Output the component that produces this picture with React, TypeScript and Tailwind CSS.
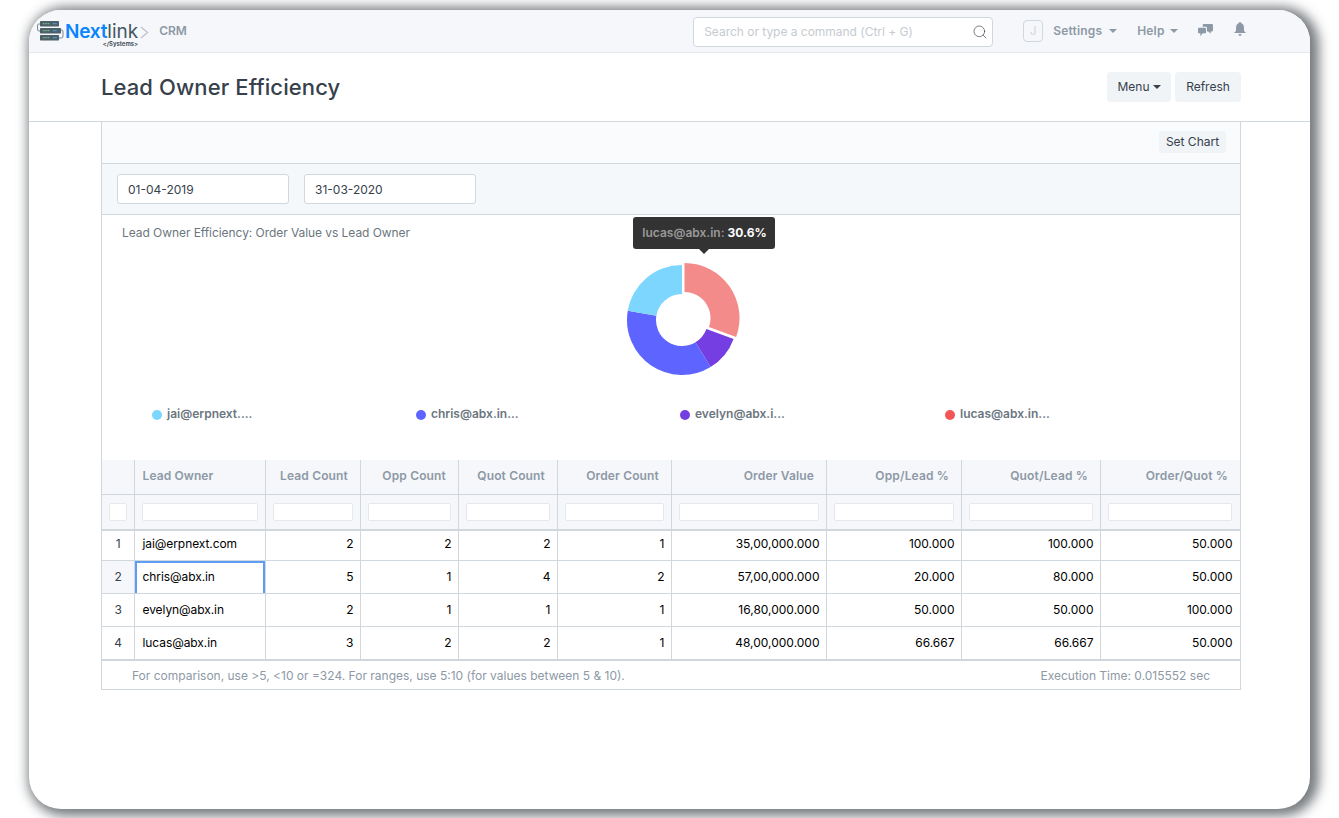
import React from 'react';
import { Search } from 'lucide-react';

interface Row {
  owner: string;
  values: string[];
}

const columns = [
  { label: 'Lead Count', width: 'w-[95px]' },
  { label: 'Opp Count', width: 'w-[98px]' },
  { label: 'Quot Count', width: 'w-[99px]' },
  { label: 'Order Count', width: 'w-[114px]' },
  { label: 'Order Value', width: 'w-[155px]' },
  { label: 'Opp/Lead %', width: 'w-[135px]' },
  { label: 'Quot/Lead %', width: 'w-[139px]' },
  { label: 'Order/Quot %', width: 'w-[140px]' },
];

const rows: Row[] = [
  { owner: 'jai@erpnext.com', values: ['2', '2', '2', '1', '35,00,000.000', '100.000', '100.000', '50.000'] },
  { owner: 'chris@abx.in', values: ['5', '1', '4', '2', '57,00,000.000', '20.000', '80.000', '50.000'] },
  { owner: 'evelyn@abx.in', values: ['2', '1', '1', '1', '16,80,000.000', '50.000', '50.000', '100.000'] },
  { owner: 'lucas@abx.in', values: ['3', '2', '2', '1', '48,00,000.000', '66.667', '66.667', '50.000'] },
];

const rowHeights = ['h-[30px]', 'h-[33px]', 'h-[33px]', 'h-[34px]'];

const legend = [
  { label: 'jai@erpnext....', dot: 'bg-[#7cd6fd]' },
  { label: 'chris@abx.in...', dot: 'bg-[#5e64ff]' },
  { label: 'evelyn@abx.i...', dot: 'bg-[#743ee2]' },
  { label: 'lucas@abx.in...', dot: 'bg-[#f25555]' },
];

// donut slices, clockwise from 12 o'clock
const slices = [
  { from: 0, to: 110.2, fill: '#f48b8b', dx: 2.5, dy: -2 },
  { from: 110.2, to: 148.7, fill: '#743ee2', dx: 0, dy: 0 },
  { from: 148.7, to: 279.6, fill: '#5e64ff', dx: 0, dy: 0 },
  { from: 279.6, to: 360, fill: '#7cd6fd', dx: 0, dy: 0 },
];

const slicePath = (from: number, to: number, cx: number, cy: number) => {
  const pt = (r: number, a: number) => {
    const rad = (a * Math.PI) / 180;
    return `${(cx + r * Math.sin(rad)).toFixed(2)} ${(cy - r * Math.cos(rad)).toFixed(2)}`;
  };
  const big = to - from > 180 ? 1 : 0;
  return `M${pt(55, from)} A55 55 0 ${big} 1 ${pt(55, to)} L${pt(26, to)} A26 26 0 ${big} 0 ${pt(26, from)} Z`;
};

const Logo = () => (
  <div className="flex items-center">
    <svg width="27" height="22" viewBox="0 0 27 22" className="shrink-0">
      <path d="M4 4 H1.5 Q0.5 4 0.5 6 V9 Q0.5 11 2 11 H4" fill="none" stroke="#5b6b75" strokeWidth="0.8" />
      <path d="M22 10 H25 Q26 10 26 12 V16 Q26 18 24.5 18 H22" fill="none" stroke="#5b6b75" strokeWidth="0.8" />
      <rect x="3" y="1" width="19" height="5.4" rx="0.6" fill="#4d5f69" />
      <rect x="3" y="8" width="21" height="5.4" rx="0.6" fill="#4d5f69" />
      <rect x="3" y="15" width="19" height="5.4" rx="0.6" fill="#4d5f69" />
      <path d="M6 3.7 H13 M6 10.7 H13 M6 17.7 H13" stroke="#7ed98a" strokeWidth="0.9" strokeDasharray="1.5 0.8" />
      <path d="M16 3.7 H20 M16 10.7 H20 M16 17.7 H20" stroke="#4aa3df" strokeWidth="1.2" strokeDasharray="1.5 0.6" />
    </svg>
    <div className="relative ml-px flex items-center">
      <span className="text-[19px] leading-none font-semibold tracking-[-0.2px] text-[#0a84ff]">Next</span>
      <span className="text-[19px] leading-none font-normal text-[#44565f]">link</span>
      <span className="absolute top-[19px] right-0 text-[6px] leading-none font-semibold text-[#36414c]">&lt;/Systems&gt;</span>
    </div>
    <svg width="9" height="13" viewBox="0 0 9 13" className="mt-[2px] ml-[2px]">
      <path d="M1 1 L7.5 6.5 L1 12" fill="none" stroke="#c0c6cc" strokeWidth="1.5" />
    </svg>
  </div>
);

const Navbar = () => (
  <header className="flex h-[43px] shrink-0 items-center rounded-t-[32px] border-b border-[#e5e9ed] bg-[#f5f7fa] pl-[8px]">
    <Logo />
    <span className="ml-[10px] w-[29px] text-[12px] font-semibold text-[#8d99a6]">CRM</span>
    <div className="mt-[2px] ml-[505px] flex h-[30px] w-[300px] items-center justify-between rounded-[4px] border border-[#d1d8dd] bg-white pr-[4px] pl-[10px]">
      <span className="text-[12px] tracking-[-0.02px] text-[#c5cbd1]">Search or type a command (Ctrl + G)</span>
      <Search size={16} strokeWidth={1} className="text-[#36414c]" />
    </div>
    <div className="ml-[30px] flex h-[22px] w-[20px] items-center justify-center rounded-[4px] border border-[#d1d8dd] text-[12px] text-[#d1d8dd]">J</div>
    <span className="ml-[10px] w-[51px] text-[12px] font-semibold tracking-[0.2px] text-[#8d99a6]">Settings</span>
    <span className="ml-[5px] h-0 w-0 border-x-[4px] border-t-[4px] border-x-transparent border-t-[#8d99a6]" />
    <span className="ml-[20px] w-[28px] text-[12px] font-semibold tracking-[0.2px] text-[#8d99a6]">Help</span>
    <span className="ml-[5px] h-0 w-0 border-x-[4px] border-t-[4px] border-x-transparent border-t-[#8d99a6]" />
    <svg width="15" height="14" viewBox="0 0 16 15" className="ml-[20px]" fill="#8d99a6">
      <path d="M5 1 Q5 0 6 0 H15 Q16 0 16 1 V7 Q16 8 15 8 H13.5 V10.5 L11 8 H9.5 V4 Q9.5 3 8.5 3 H5 Z" />
      <path d="M1 4 H7.5 Q8.5 4 8.5 5 V9 Q8.5 10 7.5 10 H5 L2.5 13 V10 H1 Q0 10 0 9 V5 Q0 4 1 4 Z" />
    </svg>
    <svg width="12" height="14" viewBox="0 0 12 14" className="mb-[4px] ml-[21px]" fill="#8d99a6">
      <path d="M6 0 Q7 0 7 1 Q10 2 10 6 V9 L12 11 H0 L2 9 V6 Q2 2 5 1 Q5 0 6 0 Z M4.5 12 H7.5 Q7.5 14 6 14 Q4.5 14 4.5 12 Z" />
    </svg>
  </header>
);

const PageHead = () => (
  <div className="flex h-[69px] shrink-0 items-center justify-between border-b border-[#d1d8dd] pr-[69px] pl-[72px]">
    <h1 className="text-[22px] leading-none font-medium tracking-[0.1px] text-[#36414c]">Lead Owner Efficiency</h1>
    <div className="flex gap-[4px]">
      <button className="flex h-[30px] w-[64px] items-center justify-center gap-[3px] rounded-[4px] bg-[#f0f4f7] text-[12px] text-[#36414c]">
        Menu
        <span className="h-0 w-0 border-x-[4px] border-t-[4px] border-x-transparent border-t-[#36414c]" />
      </button>
      <button className="h-[30px] w-[66px] rounded-[4px] bg-[#f0f4f7] text-[12px] text-[#36414c]">Refresh</button>
    </div>
  </div>
);

const Filters = () => (
  <>
    <div className="flex h-[42px] items-center justify-end border-b border-[#d1d8dd] bg-[#fafbfc] pr-[14px] pb-[2px]">
      <button className="h-[22px] w-[67px] rounded-[3px] bg-[#f0f4f7] text-[12px] text-[#36414c]">Set Chart</button>
    </div>
    <div className="flex h-[51px] items-center gap-[15px] border-b border-[#d1d8dd] bg-[#f4f8fb] pl-[15px]">
      <div className="flex h-[30px] w-[172px] items-center rounded-[3px] border border-[#d1d8dd] bg-white pt-[2px] pl-[10px] text-[12px] text-[#36414c]">01-04-2019</div>
      <div className="flex h-[30px] w-[172px] items-center rounded-[3px] border border-[#d1d8dd] bg-white pt-[2px] pl-[10px] text-[12px] text-[#36414c]">31-03-2020</div>
    </div>
  </>
);

const Chart = () => (
  <div className="relative h-[245px]">
    <p className="pt-[10px] pl-[20px] text-[12px] leading-[16px] tracking-[-0.06px] text-[#6c7680]">Lead Owner Efficiency: Order Value vs Lead Owner</p>
    <svg width="120" height="120" viewBox="0 0 120 120" className="mt-[19px] ml-[520px]">
      {slices.map((s) => (
        <path key={s.fill} d={slicePath(s.from, s.to, 60 + s.dx, 60 + s.dy)} fill={s.fill} />
      ))}
    </svg>
    <div className="mt-[26px] grid grid-cols-[264px_264px_265px_auto] pl-[50px]">
      {legend.map((item) => (
        <div key={item.label} className="flex items-center gap-[5px]">
          <span className={`mt-[2px] h-[10px] w-[10px] rounded-full ${item.dot}`} />
          <span className="text-[12px] leading-[16px] font-semibold text-[#6c7680]">{item.label}</span>
        </div>
      ))}
    </div>
    {/* hover tooltip over the pie */}
    <div className="absolute top-[2px] left-[531px] flex h-[32px] w-[142px] items-center justify-center rounded-[3px] bg-[#333333] pl-[1px] text-[12px] font-semibold text-[#999999]">
      lucas@abx.in:&nbsp;<span className="font-bold text-white">30.6%</span>
      <span className="absolute top-full left-[66px] h-0 w-0 border-x-[5px] border-t-[5px] border-x-transparent border-t-[#333333]" />
    </div>
  </div>
);

const ReportTable = () => (
  <table className="w-[1138px] table-fixed border-collapse text-[12px]">
    <colgroup>
      <col className="w-[32px]" />
      <col className="w-[131px]" />
      {columns.map((c) => (
        <col key={c.label} className={c.width} />
      ))}
    </colgroup>
    <thead>
      <tr className="h-[34px] bg-[#f5f7fa] text-[#8d99a6]">
        <th className="border-r border-b border-[#d1d8dd]" />
        <th className="border-x border-b border-[#d1d8dd] pl-[8px] pb-[2px] text-left font-semibold tracking-[0.1px]">Lead Owner</th>
        {columns.map((c) => (
          <th key={c.label} className="border-x border-b border-[#d1d8dd] pr-[11.5px] pb-[2px] text-right font-semibold tracking-[0.15px]">{c.label}</th>
        ))}
      </tr>
      <tr className="h-[36px] bg-[#f5f7fa]">
        <th className="border-r border-b-2 border-[#d1d8dd] pl-[7px]">
          <div className="h-[18px] w-[18px] rounded-[2px] border border-[#e5e9ed] bg-white" />
        </th>
        <th className="border-x border-b-2 border-[#d1d8dd] px-[7px]">
          <div className="h-[18px] rounded-[2px] border border-[#e5e9ed] bg-white" />
        </th>
        {columns.map((c, j) => (
          <th key={c.label} className={`border-x border-b-2 border-[#d1d8dd] pl-[7px] ${j === columns.length - 1 ? 'pr-[8px]' : 'pr-[7px]'}`}>
            <div className="h-[18px] rounded-[2px] border border-[#e5e9ed] bg-white" />
          </th>
        ))}
      </tr>
    </thead>
    <tbody className="text-black">
      {rows.map((row, i) => (
        <tr key={row.owner} className={rowHeights[i]}>
          <td className={`border-r border-b border-[#d1d8dd] pl-[1px] text-center text-[#36414c] ${i === 0 ? 'pb-[2px]' : ''} ${i === 1 ? 'bg-[#f5f7fa]' : ''} ${i === 3 ? 'border-b-2' : ''}`}>{i + 1}</td>
          <td className={`relative border-x border-b border-[#d1d8dd] pl-[8px] tracking-[-0.08px] ${i === 0 ? 'pb-[2px]' : ''} ${i === 3 ? 'border-b-2' : ''}`}>
            {row.owner}
            {i === 1 && <span className="absolute inset-0 border-x-2 border-t-2 border-[#5e9cf5]" />}
          </td>
          {row.values.map((v, j) => (
            <td key={j} className={`border-x border-b border-[#d1d8dd] text-right ${j === row.values.length - 1 ? 'pr-[7px]' : 'pr-[6px]'} ${i === 0 ? 'pb-[2px]' : ''} ${i === 3 ? 'border-b-2' : ''}`}>{v}</td>
          ))}
        </tr>
      ))}
    </tbody>
  </table>
);

export default function App() {
  return (
    <div className="h-[818px] w-[1339px] overflow-hidden bg-white pt-[10px] pr-[29px] pb-[9px] pl-[29px] font-['Inter',sans-serif]">
      <div className="flex h-[799px] flex-col rounded-[32px] bg-white shadow-[4px_2px_12px_5px_rgba(85,90,95,0.8)]">
        <Navbar />
        <PageHead />
        <main className="ml-[72px] w-[1140px] border-x border-b border-[#d1d8dd]">
          <Filters />
          <Chart />
          <ReportTable />
          <div className="flex h-[28px] items-center justify-between px-[30px] pt-[2px] text-[12px] text-[#8d99a6]">
            <span>For comparison, use &gt;5, &lt;10 or =324. For ranges, use 5:10 (for values between 5 &amp; 10).</span>
            <span>Execution Time: 0.015552 sec</span>
          </div>
        </main>
      </div>
    </div>
  );
}
